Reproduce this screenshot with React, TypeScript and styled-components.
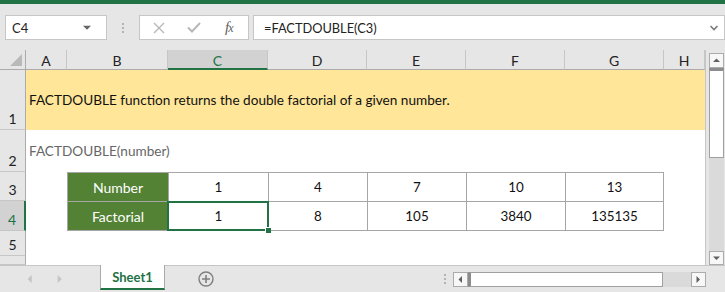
import React from 'react';
import styled, { createGlobalStyle } from 'styled-components';

const GlobalStyle = createGlobalStyle`
  html, body {
    margin: 0;
    padding: 0;
    background: #ffffff;
  }
  body {
    font-family: Lato, "Liberation Sans", sans-serif;
  }
`;

const excelGreen = '#217346';
const cellFont = 'Lato, "Liberation Sans", sans-serif';

const Window = styled.div`
  width: 725px;
  height: 292px;
  display: flex;
  flex-direction: column;
  background: #e6e6e6;
  overflow: hidden;
`;

const TitleStrip = styled.div`
  flex: none;
  height: 4px;
  background: ${excelGreen};
`;

// 수식 입력줄
const FormulaRow = styled.div`
  flex: none;
  height: 46px;
  box-sizing: border-box;
  padding: 11px 0 0 5px;
  display: flex;
  align-items: flex-start;
`;

const NameBox = styled.div`
  width: 102px;
  height: 25px;
  box-sizing: border-box;
  background: #fff;
  border: 1px solid #c6c6c6;
  display: flex;
  align-items: center;
  justify-content: space-between;
  padding: 0 15px 0 6px;
  font-family: ${cellFont};
  font-size: 13px;
  color: #222;
`;

const Grip = styled.div`
  width: 32px;
  height: 25px;
  display: flex;
  flex-direction: column;
  align-items: center;
  justify-content: center;
  gap: 2px;

  span {
    width: 2px;
    height: 2px;
    background: #b3b3b3;
  }
`;

const ButtonBox = styled.div`
  width: 110px;
  height: 25px;
  box-sizing: border-box;
  background: #fff;
  border: 1px solid #c6c6c6;
  display: flex;
  align-items: center;
  padding: 0 0 0 13px;
  gap: 22px;
`;

const FxLabel = styled.span`
  font-family: "Liberation Serif", serif;
  font-style: italic;
  font-size: 15px;
  color: #606060;
  margin-left: 2px;
  letter-spacing: -1px;

  sub {
    font-size: 12px;
    vertical-align: baseline;
  }
`;

const FormulaBox = styled.div`
  width: 472px;
  height: 25px;
  margin-left: 4px;
  box-sizing: border-box;
  background: #fff;
  border: 1px solid #c6c6c6;
  display: flex;
  align-items: center;
  justify-content: space-between;
  padding: 0 5px 0 10px;
  font-family: ${cellFont};
  font-size: 12.8px;
  color: #222;
`;

// 시트 영역
const SheetArea = styled.div`
  flex: none;
  height: 215px;
  display: flex;
`;

const Grid = styled.div`
  width: 706px;
  box-sizing: border-box;
  border-right: 1px solid #c6c6c6;
  background: #fff;
  display: grid;
  grid-template-columns: 26px 41px 101px 100px 99px 99px 99px 99px 41px;
  grid-template-rows: 20px 60px 42px 29px 30px 25px 9px;
  font-family: ${cellFont};
`;

const Corner = styled.div`
  background: #e6e6e6;
  border-right: 1px solid #ababab;
  border-bottom: 1px solid #ababab;
  position: relative;

  &::after {
    content: '';
    position: absolute;
    right: 3px;
    bottom: 3px;
    width: 0;
    height: 0;
    border-left: 12px solid transparent;
    border-bottom: 12px solid #b9b9b9;
  }
`;

const ColHeader = styled.div<{ $active?: boolean }>`
  background: ${p => (p.$active ? '#d2d2d2' : '#e6e6e6')};
  border-right: 1px solid #c6c6c6;
  border-bottom: ${p => (p.$active ? `2px solid ${excelGreen}` : '1px solid #ababab')};
  display: flex;
  align-items: center;
  justify-content: center;
  font-size: 14px;
  color: ${p => (p.$active ? excelGreen : '#222')};
  padding-top: 2px;
  box-sizing: border-box;
`;

const RowHeader = styled.div<{ $active?: boolean }>`
  grid-column: 1;
  background: ${p => (p.$active ? '#d2d2d2' : '#e6e6e6')};
  border-right: ${p => (p.$active ? `2px solid ${excelGreen}` : '1px solid #ababab')};
  border-bottom: 1px solid #c6c6c6;
  display: flex;
  align-items: flex-end;
  justify-content: center;
  padding-bottom: 1px;
  box-sizing: border-box;
  font-size: 14px;
  line-height: 18px;
  color: ${p => (p.$active ? excelGreen : '#222')};
  overflow: hidden;
`;

const WideCell = styled.div<{ $fill?: string; $color?: string }>`
  grid-column: 2 / -1;
  background: ${p => p.$fill || 'transparent'};
  color: ${p => p.$color || '#111'};
  display: flex;
  align-items: center;
  padding-left: 3px;
  font-size: 13.6px;
  white-space: nowrap;
`;

const TableCell = styled.div<{ $label?: boolean; $last?: boolean; $bottom?: boolean }>`
  position: relative;
  background: ${p => (p.$label ? '#548235' : '#fff')};
  color: ${p => (p.$label ? '#fff' : '#111')};
  border-left: 1px solid #a6a6a6;
  border-top: 1px solid #a6a6a6;
  border-right: ${p => (p.$last ? '1px solid #a6a6a6' : 'none')};
  border-bottom: ${p => (p.$bottom ? '1px solid #a6a6a6' : 'none')};
  display: flex;
  align-items: center;
  justify-content: center;
  font-size: ${p => (p.$label ? '14px' : '13.4px')};
  ${p => (p.$label ? 'grid-column: 3;' : '')}
`;

const Selection = styled.div`
  position: absolute;
  z-index: 2;
  left: -2px;
  top: -1px;
  right: -1px;
  bottom: -1px;
  border: 2px solid ${excelGreen};
  pointer-events: none;

  &::after {
    content: '';
    position: absolute;
    right: -4px;
    bottom: -4px;
    width: 5px;
    height: 5px;
    background: ${excelGreen};
    border-left: 1px solid #fff;
    border-top: 1px solid #fff;
  }
`;

// 스크롤바
const VScroll = styled.div`
  width: 19px;
  padding: 3px 0 0 3px;
  box-sizing: border-box;
  display: flex;
  flex-direction: column;
`;

const ScrollButton = styled.div<{ $size?: number }>`
  width: 15px;
  height: ${p => p.$size || 15}px;
  flex: none;
  box-sizing: border-box;
  border: 1px solid #ababab;
  background: #f7f7f7;
  display: flex;
  align-items: center;
  justify-content: center;
`;

const VThumb = styled.div`
  width: 15px;
  height: 90px;
  flex: none;
  box-sizing: border-box;
  border: 1px solid #a0a0a0;
  border-top: 3px solid #8c8c8c;
  background: #fff;
`;

const VTrack = styled.div`
  width: 15px;
  flex: 1;
  background: #dadada;
`;

const BottomBar = styled.div`
  flex: 1;
  display: flex;
  align-items: flex-start;
  box-shadow: inset 0 1px 0 #c6c6c6;
`;

const NavArrows = styled.div`
  width: 100px;
  height: 27px;
  display: flex;
  align-items: center;
  padding-left: 26px;
  box-sizing: border-box;
  gap: 22px;
`;

const SheetTab = styled.div`
  width: 65px;
  height: 25px;
  box-sizing: border-box;
  background: #fff;
  border-left: 1px solid #ababab;
  border-right: 1px solid #ababab;
  border-bottom: 2px solid ${excelGreen};
  display: flex;
  align-items: center;
  justify-content: center;
  font-family: ${cellFont};
  font-weight: 700;
  font-size: 13px;
  color: ${excelGreen};
`;

const AddSheet = styled.div`
  width: 16px;
  height: 16px;
  margin: 6px 0 0 33px;
  display: flex;
`;

const BarGrip = styled(Grip)`
  width: 16px;
  height: 27px;
  margin-left: 223px;
  padding-top: 1px;
  box-sizing: border-box;
`;

const HScroll = styled.div`
  width: 253px;
  height: 15px;
  margin-top: 7px;
  display: flex;
`;

const HThumb = styled.div`
  width: 195px;
  height: 15px;
  box-sizing: border-box;
  border: 1px solid #a0a0a0;
  border-left: 3px solid #8c8c8c;
  background: #fff;
`;

const HTrack = styled.div`
  flex: 1;
  background: #dadada;
`;

const Tri = ({ dir, color = '#555', size = 7 }: { dir: 'up' | 'down' | 'left' | 'right'; color?: string; size?: number }) => {
  const pts: Record<string, string> = {
    up: '0,5 7,5 3.5,1.5',
    down: '0,1.5 7,1.5 3.5,5',
    left: '5,0 5,7 1.5,3.5',
    right: '1.5,0 1.5,7 5,3.5',
  };
  return (
    <svg width={size} height={size} viewBox="0 0 7 7">
      <polygon points={pts[dir]} fill={color} />
    </svg>
  );
};

const columns = ['A', 'B', 'C', 'D', 'E', 'F', 'G', 'H'];
const numbers = [1, 4, 7, 10, 13];
const results = [1, 8, 105, 3840, 135135];

export default function App() {
  return (
    <>
      <GlobalStyle />
      <Window>
        <TitleStrip />
        <FormulaRow>
          <NameBox>
            <span>C4</span>
            <Tri dir="down" color="#666" size={8} />
          </NameBox>
          <Grip>
            <span />
            <span />
            <span />
          </Grip>
          <ButtonBox>
            <svg width="12" height="12" viewBox="0 0 12 12">
              <path d="M1 1 L11 11 M11 1 L1 11" stroke="#b8b8b8" strokeWidth="1.4" fill="none" />
            </svg>
            <svg width="14" height="11" viewBox="0 0 14 11">
              <path d="M1 5.5 L5 9.5 L13 1" stroke="#b8b8b8" strokeWidth="2" fill="none" />
            </svg>
            <FxLabel>
              f<sub>x</sub>
            </FxLabel>
          </ButtonBox>
          <FormulaBox>
            <span>=FACTDOUBLE(C3)</span>
            <svg width="10" height="8" viewBox="0 0 10 8">
              <path d="M1.5 2 L5 5.5 L8.5 2" stroke="#7a7a7a" strokeWidth="1.6" fill="none" />
            </svg>
          </FormulaBox>
        </FormulaRow>

        <SheetArea>
          <Grid>
            <Corner />
            {columns.map(c => (
              <ColHeader key={c} $active={c === 'C'}>
                {c}
              </ColHeader>
            ))}

            <RowHeader>1</RowHeader>
            <WideCell $fill="#ffe699">
              FACTDOUBLE function returns the double factorial of a given number.
            </WideCell>

            <RowHeader>2</RowHeader>
            <WideCell $color="#666">FACTDOUBLE(number)</WideCell>

            <RowHeader>3</RowHeader>
            <TableCell $label>Number</TableCell>
            {numbers.map((n, i) => (
              <TableCell key={n} $last={i === numbers.length - 1}>
                {n}
              </TableCell>
            ))}

            <RowHeader $active>4</RowHeader>
            <TableCell $label $bottom>
              Factorial
            </TableCell>
            {results.map((r, i) => (
              <TableCell key={r} $bottom $last={i === results.length - 1}>
                {r}
                {i === 0 && <Selection />}
              </TableCell>
            ))}

            <RowHeader>5</RowHeader>
            <RowHeader />
          </Grid>

          <VScroll>
            <ScrollButton>
              <Tri dir="up" color="#606060" />
            </ScrollButton>
            <VThumb />
            <VTrack />
            <ScrollButton $size={14}>
              <Tri dir="down" color="#606060" />
            </ScrollButton>
          </VScroll>
        </SheetArea>

        <BottomBar>
          <NavArrows>
            <Tri dir="left" color="#c4c4c4" size={8} />
            <Tri dir="right" color="#c4c4c4" size={8} />
          </NavArrows>
          <SheetTab>Sheet1</SheetTab>
          <AddSheet>
            <svg width="16" height="16" viewBox="0 0 16 16">
              <circle cx="8" cy="8" r="7" stroke="#7f7f7f" strokeWidth="1.4" fill="none" />
              <path d="M8 4 V12 M4 8 H12" stroke="#7f7f7f" strokeWidth="1.6" />
            </svg>
          </AddSheet>
          <BarGrip>
            <span />
            <span />
            <span />
          </BarGrip>
          <HScroll>
            <ScrollButton>
              <Tri dir="left" color="#606060" />
            </ScrollButton>
            <HThumb />
            <HTrack />
            <ScrollButton $size={15}>
              <Tri dir="right" color="#606060" />
            </ScrollButton>
          </HScroll>
        </BottomBar>
      </Window>
    </>
  );
}
